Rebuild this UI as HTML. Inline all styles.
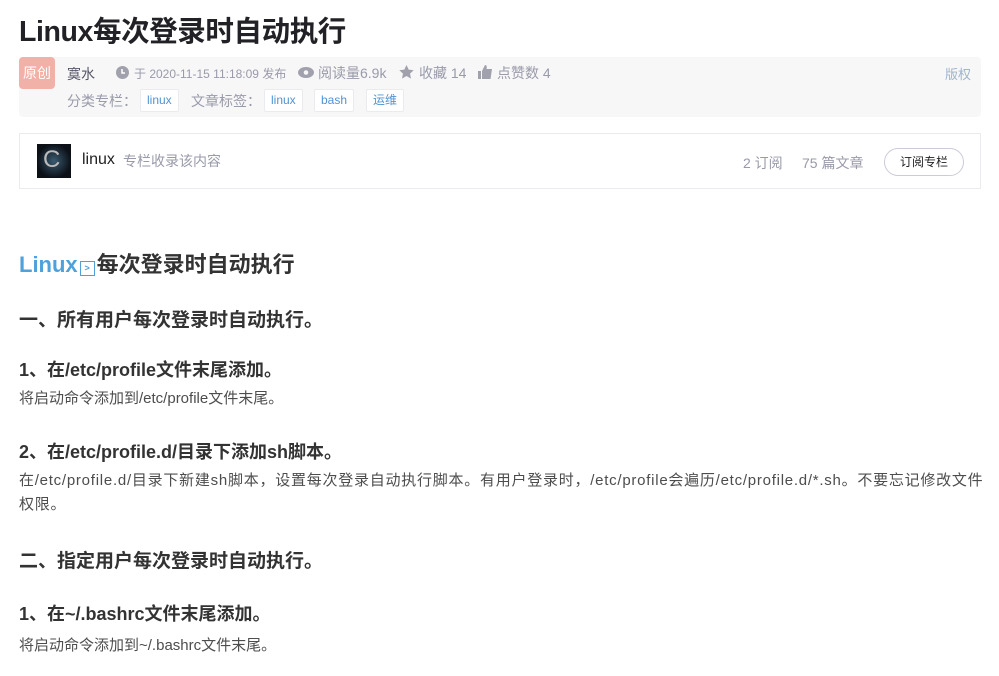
<!DOCTYPE html>
<html><head><meta charset="utf-8"><style>
*{margin:0;padding:0;box-sizing:border-box}
body{width:999px;height:676px;background:#fff;font-family:"Liberation Sans","Noto Sans CJK SC",sans-serif;color:#4d4d4d;position:relative;overflow:hidden}
.a{position:absolute;white-space:nowrap}
h1{position:absolute;left:19px;top:9px;font-size:28.5px;font-weight:bold;color:#222226;letter-spacing:-0.4px}
.meta{position:absolute;left:19px;top:57px;width:962px;height:60px;background:#f7f7f7;border-radius:4px}
.yc{position:absolute;left:0;top:0;width:36px;height:32px;background:#f2b1a8;color:#fff;font-size:14px;line-height:32px;text-align:center;border-radius:4px}
.m{font-size:14px;color:#999aaa}
.tag{position:absolute;top:89px;height:23px;border:1px solid #eaeaef;background:#fff;color:#5094d5;font-size:12px;line-height:21px;padding:0 6px;border-radius:2px}
.col{position:absolute;left:19px;top:133px;width:962px;height:56px;border:1px solid #eaeaef}
h2{position:absolute;left:19px;font-size:22px;font-weight:bold;color:#333}
h3{position:absolute;left:19px;font-size:19px;font-weight:bold;color:#333}
p{position:absolute;left:19px;font-size:15px;color:#4d4d4d;line-height:24px;width:975px;white-space:nowrap}
</style></head><body>
<h1>Linux每次登录时自动执行</h1>
<div class="meta"><div class="yc">原创</div></div>
<div class="a" style="left:67px;top:64px;font-size:14px;color:#555666">寞水</div>
<svg class="a" style="left:116px;top:66px" width="13" height="13"><circle cx="6.5" cy="6.5" r="6.5" fill="#a0a1ad"/><path d="M6 3v4h3" stroke="#fff" stroke-width="1.5" fill="none"/></svg>
<div class="a m" style="left:134px;top:65px;font-size:12px">于 2020-11-15 11:18:09 发布</div>
<svg class="a" style="left:298px;top:67px" width="16" height="11"><ellipse cx="8" cy="5.5" rx="8" ry="5.5" fill="#a0a1ad"/><circle cx="8" cy="5.5" r="2.3" fill="#f7f7f7"/></svg>
<div class="a m" style="left:318px;top:63px">阅读量6.9k</div>
<svg class="a" style="left:399px;top:65px" width="15" height="14"><path d="M7.5 0l2.2 4.6 5 .6-3.7 3.4 1 5L7.5 11 3 13.6l1-5L.3 5.2l5-.6z" fill="#a0a1ad"/></svg>
<div class="a m" style="left:419px;top:63px">收藏 14</div>
<svg class="a" style="left:478px;top:65px" width="15" height="14"><path d="M0 6h3v8H0zM4 6l3-6c2 0 2 2 1.5 4H14l-1.5 10H4z" fill="#a0a1ad"/></svg>
<div class="a m" style="left:497px;top:63px">点赞数 4</div>
<div class="a" style="left:945px;top:64px;font-size:13px;color:#a0b4cc">版权</div>
<div class="a m" style="left:67px;top:91px">分类专栏：</div>
<div class="tag" style="left:140px">linux</div>
<div class="a m" style="left:191px;top:91px">文章标签：</div>
<div class="tag" style="left:264px">linux</div>
<div class="tag" style="left:314px">bash</div>
<div class="tag" style="left:366px">运维</div>
<div class="col"></div>
<div class="a" style="left:37px;top:144px;width:34px;height:34px;background:radial-gradient(circle at 50% 50%,#3a5a70,#0c1118 70%)"></div>
<div class="a" style="left:43px;top:146px;font-size:24px;color:#bbb">C</div>
<div class="a" style="left:82px;top:151px;font-size:16px;color:#222">linux</div>
<div class="a" style="left:123px;top:151px;font-size:14px;color:#999aaa">专栏收录该内容</div>
<div class="a" style="left:743px;top:153px;font-size:14px;color:#999aaa">2 订阅</div>
<div class="a" style="left:802px;top:153px;font-size:14px;color:#999aaa">75 篇文章</div>
<div class="a" style="left:884px;top:148px;width:80px;height:28px;border:1px solid #ccccd8;border-radius:14px;font-size:12px;color:#222;text-align:center;line-height:26px">订阅专栏</div>
<h2 style="top:247px"><span style="color:#4ea1db">Linux</span><span style="display:inline-block;width:15px;height:15px;border:1px solid #4ea1db;font-size:9px;line-height:13px;color:#4ea1db;vertical-align:1px;margin:0 2px;text-align:center">&gt;</span>每次登录时自动执行</h2>
<h3 style="top:305px">一、所有用户每次登录时自动执行。</h3>
<h3 style="top:356px;font-size:18px">1、在/etc/profile文件末尾添加。</h3>
<p style="top:387px">将启动命令添加到/etc/profile文件末尾。</p>
<h3 style="top:438px;font-size:18px">2、在/etc/profile.d/目录下添加sh脚本。</h3>
<p style="top:469px;letter-spacing:0.75px">在/etc/profile.d/目录下新建sh脚本，设置每次登录自动执行脚本。有用户登录时，/etc/profile会遍历/etc/profile.d/*.sh。不要忘记修改文件<br>权限。</p>
<h3 style="top:546px">二、指定用户每次登录时自动执行。</h3>
<h3 style="top:600px;font-size:18px">1、在~/.bashrc文件末尾添加。</h3>
<p style="top:634px">将启动命令添加到~/.bashrc文件末尾。</p>
</body></html>
